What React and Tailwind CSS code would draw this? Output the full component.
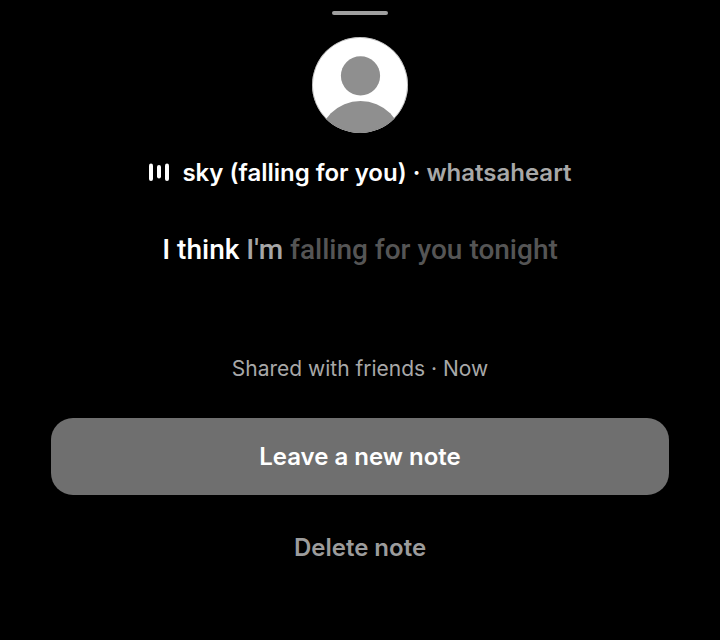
import React from "react";

const lyrics = [
  { text: "I think", color: "text-white" },
  { text: "I'm", color: "text-[#a6a6a6]" },
  { text: "falling for you tonight", color: "text-[#555555]" },
];

function Avatar() {
  return (
    <svg
      viewBox="0 0 96 96"
      className="w-24 h-24 rounded-full bg-white"
      role="img"
      aria-label="Profile picture"
    >
      <circle cx="48.5" cy="38.8" r="19.6" fill="#8f8f8f" />
      <circle cx="48.5" cy="106" r="42" fill="#8f8f8f" />
      <circle cx="48" cy="48" r="47.7" fill="none" stroke="#8a8a8a" strokeWidth="0.6" />
    </svg>
  );
}

function MusicBars() {
  return (
    <svg viewBox="0 0 22 20" className="w-[22px] h-5 shrink-0" aria-hidden="true">
      <g stroke="#ffffff" strokeWidth="4" strokeLinecap="round">
        <path d="M3 2.5v13.5" />
        <path d="M11 4v9.5" />
        <path d="M19 2.5v13.5" />
      </g>
    </svg>
  );
}

function App() {
  return (
    <main className="min-h-screen flex flex-col items-center bg-black px-[51px] pt-[11px] text-center font-['Inter',sans-serif]">
      <div className="w-14 h-1 rounded-full bg-[#a0a0a0]" />
      <div className="mt-[22px]">
        <Avatar />
      </div>
      <div className="mt-6 flex items-center gap-3">
        <MusicBars />
        <p className="text-2xl leading-8 font-semibold text-white">
          sky (falling for you) · <span className="text-[#a8a8a8]">whatsaheart</span>
        </p>
      </div>
      <p className="mt-[43px] text-[28px] leading-9 font-medium font-['Roboto',sans-serif]">
        {lyrics.map((part) => (
          <span key={part.text} className={part.color}>
            {part.text}{" "}
          </span>
        ))}
      </p>
      <p className="mt-[87px] text-[21px] leading-7 text-[#a8a8a8]">
        Shared with friends · Now
      </p>
      <button className="mt-[35px] w-full rounded-[22px] bg-[#6f6f6f] py-[22px] text-2xl leading-[33px] font-semibold text-white">
        Leave a new note
      </button>
      <button className="mt-9 text-2xl leading-[33px] font-semibold text-[#9c9c9c]">
        Delete note
      </button>
    </main>
  );
}

export default App;
